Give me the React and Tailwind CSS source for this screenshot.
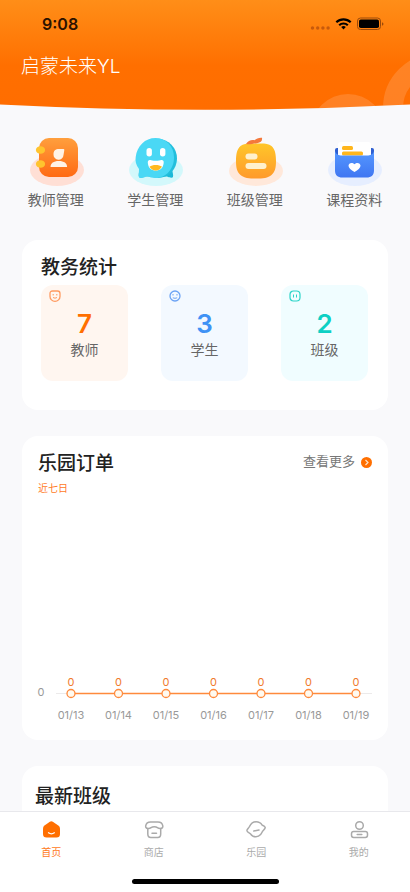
import React from "react";

const TeacherIcon = () => (
  <svg className="w-14 h-13" viewBox="0 0 56 52" fill="none">
    <defs>
      <linearGradient id="teacher" x1="0" y1="0" x2="0" y2="1">
        <stop offset="0" stopColor="#ff9f3d" />
        <stop offset="1" stopColor="#ff6a13" />
      </linearGradient>
    </defs>
    <ellipse cx="29" cy="34" rx="27" ry="16" fill="#ffdfd5" />
    <rect x="11" y="2" width="39" height="39" rx="10" fill="url(#teacher)" />
    <ellipse cx="12.500" cy="14" rx="4.600" ry="3.800" fill="#ffc42e" />
    <ellipse cx="12.500" cy="28" rx="4.600" ry="3.800" fill="#ffc42e" />
    <path d="M25.500 18.500c0-4 2-5.500 5.500-5.500h4.500q1 0 .800 1.200L35.500 19a5 5 0 0 1-10-.500Z" fill="#fff3e6" />
    <path d="M22.500 31c0-3.800 3-6 8.300-6s8.300 2.200 8.300 6Z" fill="#fff3e6" />
  </svg>
);

const StudentIcon = () => (
  <svg className="w-14 h-13" viewBox="0 0 56 52" fill="none">
    <ellipse cx="29" cy="34" rx="27" ry="16" fill="#d3f8fb" />
    <path d="M14 31c-2 4-3 8-2 10 1.500 1.500 4 .500 6-.500l22 0c3 1.500 5.500 1.500 6 .500.500-2-.500-5-1-8Z" fill="#1db9d8" />
    <ellipse cx="31" cy="22.500" rx="19" ry="19.500" fill="#22bfdc" />
    <path d="M12 33c-3-4-4-8-3.300-12C10 10 18 2 28.500 2S47 10 47 21.500 39 42 28.500 42c-3 0-6-.800-8.500-2-3 2-6 2.500-8 1.500-.500-2 0-5.500 0-8.500Z" fill="#4ad8f5" />
    <rect x="19.500" y="12" width="5.400" height="8.500" rx="2.700" fill="#fff" />
    <rect x="33" y="12" width="5.400" height="8.500" rx="2.700" fill="#fff" />
    <path d="M22.500 24c1.500-.500 3 .800 6.300.800s4.700-1.300 6.200-.800c1.500.300 2 1.500 1.600 3.500-.600 4.500-3.300 7-7.800 7s-7.400-2.500-7.900-7c-.300-2 .100-3.200 1.600-3.500Z" fill="#fff" />
    <path d="M22.500 30.800c3-2.300 9.500-2.300 12.500 0-1.500 2.500-3.500 3.600-6.200 3.600s-5-1.100-6.300-3.600Z" fill="#ffb91f" />
  </svg>
);

const ClassIcon = () => (
  <svg className="w-14 h-13" viewBox="0 0 56 52" fill="none">
    <defs>
      <linearGradient id="class" x1="0" y1="0" x2="0" y2="1">
        <stop offset="0" stopColor="#ffc629" />
        <stop offset="1" stopColor="#ff9a2b" />
      </linearGradient>
    </defs>
    <ellipse cx="29" cy="35" rx="27" ry="15" fill="#ffe8da" />
    <path d="M29 7.500c7 0 12-.500 15.500 2.500S49 18 49 25s-1 11-4.500 14-8.500 3.500-15.500 3.500-12-.500-15.500-3.500S9 32 9 25s1-12 4.500-15S22 7.500 29 7.500Z" fill="url(#class)" />
    <path d="M19 8c2-3.500 5.500-4.500 8.500-3.800C29.500 2.500 32 1.500 35 1.800c.500 3-1 5-5 5.400C26 7.700 22 9 19 8Z" fill="#f4793b" />
    <rect x="18.500" y="17.500" width="12" height="6" rx="3" fill="#fff0cc" />
    <rect x="18.500" y="27" width="21" height="6" rx="3" fill="#fff0cc" />
  </svg>
);

const MaterialIcon = () => (
  <svg className="w-14 h-13" viewBox="0 0 56 52" fill="none">
    <defs>
      <linearGradient id="material" x1="0" y1="0" x2="0" y2="1">
        <stop offset="0" stopColor="#5598ff" />
        <stop offset="1" stopColor="#3f76f2" />
      </linearGradient>
    </defs>
    <ellipse cx="29" cy="34" rx="27" ry="16" fill="#e6eeff" />
    <rect x="9" y="12" width="39" height="22" rx="2" fill="#2f5fd0" />
    <rect x="12" y="6" width="33" height="26" rx="3" fill="#fff" />
    <rect x="16" y="10" width="11" height="4" rx="1.500" fill="#ffb61c" />
    <rect x="16" y="15.500" width="21" height="4" rx="1.500" fill="#ffb61c" />
    <path d="M9 15c1 3.500 3.500 4.500 7 4.500h25c3.500 0 6-1 7-4.500v19.500c0 4.500-2.500 7-7.500 7h-24C11.500 41.500 9 39 9 34.500Z" fill="url(#material)" />
    <path d="M28.500 36c-3.500-2-6-4-6-6.200 0-3 3.800-4 6-1.500 2.200-2.500 6-1.500 6 1.500 0 2.200-2.500 4.200-6 6.200Z" fill="#fff" />
  </svg>
);

const menus = [
  { name: "教师管理", icon: <TeacherIcon /> },
  { name: "学生管理", icon: <StudentIcon /> },
  { name: "班级管理", icon: <ClassIcon /> },
  { name: "课程资料", icon: <MaterialIcon /> },
];

const stats = [
  {
    name: "教师",
    count: 7,
    box: "bg-[#fff6f0]",
    color: "text-[#ff6f00]",
    icon: (
      <svg className="w-3 h-3 text-[#ff9a60]" viewBox="0 0 12 12" fill="none" stroke="currentColor">
        <path d="M1 3.500Q1 1 3.500 1h5Q11 1 11 3.500V6.500a5 4.800 0 0 1-10 0Z" strokeWidth="1.300" />
        <path d="M3.500 4.800h1.500M7 4.800h1.500M4 7.500q2 1.400 4 0" />
      </svg>
    ),
  },
  {
    name: "学生",
    count: 3,
    box: "bg-[#f3f9ff]",
    color: "text-[#3f92f5]",
    icon: (
      <svg className="w-3 h-3 text-[#6ba3f5]" viewBox="0 0 12 12" fill="none" stroke="currentColor">
        <circle cx="6" cy="6" r="5" strokeWidth="1.300" />
        <path d="M4 4v1.500M8 4v1.500M3.800 7.800q2.200 1 4.400 0" />
      </svg>
    ),
  },
  {
    name: "班级",
    count: 2,
    box: "bg-[#f0fdff]",
    color: "text-[#0dd0c4]",
    icon: (
      <svg className="w-3 h-3 text-[#2bd4c8]" viewBox="0 0 12 12" fill="none" stroke="currentColor">
        <rect x="1" y="1" width="10" height="10" rx="3.500" strokeWidth="1.200" />
        <path d="M4.500 4.500v3M7.500 4.500v3" />
      </svg>
    ),
  },
];

const orders = [
  { date: "01/13", value: 0 },
  { date: "01/14", value: 0 },
  { date: "01/15", value: 0 },
  { date: "01/16", value: 0 },
  { date: "01/17", value: 0 },
  { date: "01/18", value: 0 },
  { date: "01/19", value: 0 },
];

const tabs = [
  {
    name: "首页",
    icon: (
      <svg className="w-5 h-5" viewBox="0 0 20 20" fill="none">
        <path d="M8.800 1.800q1.500-1 3 0l5.500 3.800Q19 6.800 19 8.500V14q0 3.500-3.500 3.500h-10Q2 17.500 2 14V8.500q0-1.700 1.500-2.900Z" fill="#ff6f00" />
        <path d="M7.500 12.800q2.900 2 5.800 0" stroke="#fff" strokeWidth="1.300" strokeLinecap="round" />
      </svg>
    ),
  },
  {
    name: "商店",
    icon: (
      <svg className="w-5 h-5" viewBox="0 0 20 20" fill="none" stroke="currentColor" strokeWidth="1.500" strokeLinecap="round">
        <path d="M3.800 8.500C2 8.300 1.500 7 1.700 5.800 2.200 3.300 4 2 6.500 2h7.500c2.500 0 4.300 1.300 4.800 3.800.200 1.200-.300 2.500-2.100 2.700-1.500.200-2.500-.300-3.300-.900-1.500-1-4.800-1-6.300 0-.800.600-1.800 1.100-3.300.900Z" />
        <path d="M3.800 8.500V14q0 3.500 3 3.500h6.900q3 0 3-3.500V8.500M8 13.300h4.500" />
      </svg>
    ),
  },
  {
    name: "乐园",
    icon: (
      <svg className="w-5 h-5" viewBox="0 0 20 20" fill="none" stroke="currentColor" strokeWidth="1.500" strokeLinecap="round" strokeLinejoin="round">
        <path d="M3.500 6.500C5 3.300 7 1.800 10 1.800c2.800 0 4.800 1 6 3.200 1.500.600 3 1.200 3.200 2.300.200 1.200-1.200 2.300-2.200 3.500-1 1.100-1.200 2.500-2.400 3.800C13.400 16 11.800 16.800 10 16.800c-2.400 0-4.300-1-5.500-3C3.200 13 1 12 .900 10.700.800 9.300 2.800 8 3.500 6.500Z" />
        <path d="M7.800 11l5.200-1" />
      </svg>
    ),
  },
  {
    name: "我的",
    icon: (
      <svg className="w-5 h-5" viewBox="0 0 20 20" fill="none" stroke="currentColor" strokeWidth="1.500" strokeLinecap="round">
        <circle cx="10.500" cy="5.500" r="3.800" />
        <rect x="2.500" y="11.500" width="16" height="6" rx="2.200" />
        <path d="M8.200 14.500h4.600" />
      </svg>
    ),
  },
];

function StatusBar() {
  return (
    <div className="relative flex h-12 items-center justify-between pl-[42px] pr-[26px] text-black">
      <span className="text-base font-semibold text-[#2b1200]">9:08</span>
      <svg className="h-4 w-[74px]" viewBox="0 0 74 16" fill="none">
        <g fill="#c75a0c">
          <circle cx="2.500" cy="12" r="1.700" />
          <circle cx="7.700" cy="12" r="1.700" />
          <circle cx="12.900" cy="12" r="1.700" />
          <circle cx="18.100" cy="12" r="1.700" />
        </g>
        <g stroke="#000" strokeWidth="2.200">
          <path d="M26.300 6.200a10.500 10.500 0 0 1 14.400 0" />
          <path d="M29.200 9.200a6.300 6.300 0 0 1 8.600 0" />
        </g>
        <path d="M33.500 13.500l-2.300-2.400a3.300 3.300 0 0 1 4.600 0Z" fill="#000" />
        <rect x="47.500" y="2" width="23" height="11.500" rx="3" stroke="#9b4a0a" />
        <rect x="49" y="3.500" width="20" height="8.500" rx="1.800" fill="#000" />
        <path d="M72 6.200v3.600q1.500-.500 1.500-1.800T72 6.200Z" fill="#9b4a0a" />
      </svg>
    </div>
  );
}

function Header() {
  return (
    <header className="relative h-[110px]">
      <svg className="absolute inset-0 h-full w-full" viewBox="0 0 410 110" preserveAspectRatio="none">
        <defs>
          <linearGradient id="sky" x1="0" y1="0" x2="0" y2="1">
            <stop offset="0" stopColor="#ff8e18" />
            <stop offset="0.600" stopColor="#ff6f00" />
            <stop offset="1" stopColor="#ff6d00" />
          </linearGradient>
          <clipPath id="hill">
            <path d="M0 0H410V104.500Q205 115 0 104.500Z" />
          </clipPath>
        </defs>
        <g clipPath="url(#hill)">
          <rect width="410" height="110" fill="url(#sky)" />
          <circle cx="348" cy="131" r="37" fill="#fff" opacity="0.140" />
          <circle cx="438" cy="108" r="45" fill="none" stroke="#fff" strokeWidth="20" opacity="0.140" />
        </g>
      </svg>
      <StatusBar />
      <h1 className="relative px-[21px] pt-[5px] text-[19px] font-light leading-7 text-white">启蒙未来YL</h1>
    </header>
  );
}

function OrderChart() {
  return (
    <svg className="w-full" viewBox="0 0 366 60" role="img" aria-label="近七日订单">
      <path d="M34 24.500H350" stroke="#eceaea" />
      <path d="M49 24.500H334" stroke="#ff8a3c" strokeWidth="1.300" />
      <text x="19" y="27" textAnchor="middle" fontSize="11" fill="#999">0</text>
      {orders.map((item, i) => {
        const x = 49 + i * 47.5;
        return (
          <g key={item.date} fontSize="11" textAnchor="middle">
            <text x={x} y="17" fill="#f07a2c">{item.value}</text>
            <circle cx={x} cy="24.500" r="4" fill="#fffaf0" stroke="#ff8a3c" strokeWidth="1.300" />
            <text x={x} y="50" fill="#999">{item.date}</text>
          </g>
        );
      })}
    </svg>
  );
}

function App() {
  return (
    <div className="flex h-screen flex-col overflow-hidden bg-[#f9f9fb] font-['Inter','Noto_Sans_CJK_SC',sans-serif]">
      <Header />
      <main className="min-h-0 flex-1 overflow-y-auto [scrollbar-width:none]">
        <div className="grid grid-cols-4 px-[6px] pt-[26px]">
          {menus.map((item) => (
            <button key={item.name} className="flex flex-col items-center">
              {item.icon}
              <span className="text-[14px] leading-6 text-[#666]">{item.name}</span>
            </button>
          ))}
        </div>

        <div className="flex flex-col gap-[26px] px-[22px] pt-7">
          <section className="h-[170px] rounded-2xl bg-white px-[19px] pt-[14px]">
            <h2 className="text-[19px] font-medium leading-7 text-[#222]">教务统计</h2>
            <div className="mt-[3px] flex justify-between pr-px">
              {stats.map((item) => (
                <div key={item.name} className={`relative h-24 w-[87px] rounded-xl pt-[25px] text-center ${item.box}`}>
                  <span className="absolute left-2 top-[5px]">{item.icon}</span>
                  <p className={`text-[26px] font-semibold leading-7 ${item.color}`}>{item.count}</p>
                  <p className="text-[14px] leading-6 text-[#666]">{item.name}</p>
                </div>
              ))}
            </div>
          </section>

          <section className="flex h-[304px] flex-col rounded-2xl bg-white pt-[14px]">
            <div className="flex items-center justify-between px-4">
              <h2 className="text-[19px] font-medium leading-7 text-[#222]">乐园订单</h2>
              <button className="flex items-center gap-[6px] pb-1 text-[13px] text-[#777]">
                查看更多
                <svg className="h-[11px] w-[11px]" viewBox="0 0 11 11" fill="none">
                  <circle cx="5.500" cy="5.500" r="5.500" fill="#ff6f00" />
                  <path d="M4.500 3l2.500 2.500L4.500 8" stroke="#ffe3c8" strokeWidth="1.200" />
                </svg>
              </button>
            </div>
            <p className="px-4 pt-[2px] text-[10px] leading-4 text-[#ff7a26]">近七日</p>
            <div className="mt-auto pb-[11px]">
              <OrderChart />
            </div>
          </section>

          <section className="h-[170px] rounded-2xl bg-white px-[13px] pt-[17px]">
            <h2 className="text-[19px] font-medium leading-7 text-[#222]">最新班级</h2>
          </section>
        </div>
      </main>

      <nav className="flex h-[81px] flex-col items-center justify-between border-t border-[#e8e8ec] bg-white pb-2 pt-2">
        <div className="grid w-full grid-cols-4">
          {tabs.map((item, i) => (
            <button
              key={item.name}
              className={`flex flex-col items-center gap-1 text-[10px] leading-4 ${i === 0 ? "text-[#ff7a1a]" : "text-[#aaa]"}`}
            >
              {item.icon}
              {item.name}
            </button>
          ))}
        </div>
        <div className="h-[5px] w-[147px] rounded-full bg-black" />
      </nav>
    </div>
  );
}
export default App;
